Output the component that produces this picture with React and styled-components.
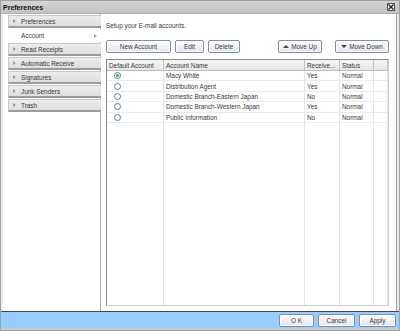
import React from "react";
import styled, { createGlobalStyle } from "styled-components";

const Global = createGlobalStyle`
  html, body { margin: 0; padding: 0; background: #fff; }
  body { font-family: "Liberation Sans", Arial, sans-serif; }
  * { box-sizing: border-box; }
`;

const Window = styled.div`
  width: 400px;
  height: 331px;
  background: #ececec;
  border: 1px solid #a0a0a0;
  display: flex;
  flex-direction: column;
  font-size: 6.4px;
  color: #3a3a3a;
`;

const TitleBar = styled.div`
  height: 13px;
  background: linear-gradient(#d4d4d4, #c2c2c2);
  border-bottom: 1px solid #b0b0b0;
  display: flex;
  align-items: center;
  justify-content: space-between;
  padding: 0 4px 0 2px;
  font-weight: bold;
  font-size: 7px;
  color: #111;
`;

const CloseBox = styled.div`
  width: 8px;
  height: 8px;
  border: 1px solid #555;
  background: #f4f4f4;
  display: flex;
  align-items: center;
  justify-content: center;
`;

const Body = styled.div`
  flex: 1;
  display: flex;
  padding: 0 2px 0 2px;
  min-height: 0;
`;

const Sidebar = styled.div`
  width: 98px;
  background: #fff;
  border-right: 1px solid #b4b4b4;
  padding: 1px 0 0 5px;
  display: flex;
  flex-direction: column;
  gap: 1px;
`;

const NavItem = styled.div`
  height: 13px;
  margin-right: -2px;
  display: flex;
  align-items: center;
  justify-content: space-between;
  padding: 0 4px 0 4px;
  background: ${(p) => (p.$active ? "#fff" : "linear-gradient(#ececec, #dedede)")};
  border: ${(p) => (p.$active ? "1px solid transparent" : "1px solid #cacaca")};
  border-bottom: ${(p) => (p.$active ? "1px solid transparent" : "2px solid #9c9c9c")};
  color: #3a3a3a;
`;

const NavLabel = styled.span`
  display: flex;
  align-items: center;
  gap: 5px;
`;

const Tri = styled.span`
  width: 0;
  height: 0;
  border-top: 2px solid transparent;
  border-bottom: 2px solid transparent;
  border-left: 3px solid #a0a0a0;
  visibility: ${(p) => (p.$hidden ? "hidden" : "visible")};
`;

const Content = styled.div`
  flex: 1;
  background: #fff;
  padding: 6px 7px 5px 5px;
  display: flex;
  flex-direction: column;
  border-right: 1px solid #a89aa8;
`;

const Intro = styled.div`
  height: 10px;
  display: flex;
  align-items: center;
  margin-bottom: 10px;
`;

const ButtonRow = styled.div`
  display: flex;
  align-items: center;
  gap: 4px;
  margin-bottom: 6px;
`;

const Spacer = styled.div`
  flex: 1;
`;

const Btn = styled.button`
  height: 13px;
  width: ${(p) => p.$w}px;
  padding: 0;
  margin-left: ${(p) => p.$ml || 0}px;
  border: 1px solid #7d8fab;
  border-radius: 2px;
  background: linear-gradient(#fdfdfd, #e4e6ee);
  font-family: "Liberation Sans", Arial, sans-serif;
  font-size: 6.4px;
  color: #3a3a3a;
  display: flex;
  align-items: center;
  justify-content: center;
  gap: 2px;
  box-shadow: inset 0 0 0 1px #fff;
`;

const UpTri = styled.span`
  width: 0;
  height: 0;
  border-left: 3px solid transparent;
  border-right: 3px solid transparent;
  ${(p) => (p.$down ? "border-top: 3px solid #444;" : "border-bottom: 3px solid #444;")}
`;

const Table = styled.div`
  flex: 1;
  border: 1px solid #8a8a8a;
  border-right-color: #d0d0d0;
  border-bottom-color: #d0d0d0;
  display: grid;
  grid-template-columns: 57px 141px 35px 34px 1fr;
  grid-template-rows: 11px repeat(5, 10.4px) 1fr;
  background: #fff;
`;

const Head = styled.div`
  background: linear-gradient(#f6f6f6, #e6e6e6);
  border-right: 1px solid #c4c4c4;
  border-bottom: 1px solid #bdbdbd;
  padding-left: 2px;
  display: flex;
  align-items: center;
  white-space: nowrap;
  overflow: hidden;
`;

const Cell = styled.div`
  border-right: 1px solid #e4e4e4;
  border-bottom: 1px solid #ececec;
  padding-left: 2px;
  display: flex;
  align-items: center;
  white-space: nowrap;
  overflow: hidden;
`;

const FillCell = styled.div`
  border-right: 1px solid #e4e4e4;
`;

const Radio = styled.span`
  margin-left: 5px;
  width: 7px;
  height: 7px;
  border-radius: 50%;
  border: 1px solid #5a7ea6;
  background: #fff;
  display: flex;
  align-items: center;
  justify-content: center;
  &::after {
    content: "";
    width: 3px;
    height: 3px;
    border-radius: 50%;
    background: ${(p) => (p.$checked ? "#3aa83a" : "transparent")};
  }
`;

const Footer = styled.div`
  height: 19px;
  background: #99ccff;
  border-top: 1px solid #3a4a5a;
  border-bottom: 2px solid #c8c8c8;
  display: flex;
  align-items: center;
  justify-content: flex-end;
  gap: 4px;
  padding-right: 3px;
`;

const navItems = [
  "Preferences",
  "Account",
  "Read Receipts",
  "Automatic Receive",
  "Signatures",
  "Junk Senders",
  "Trash",
];

const accounts = [
  { name: "Macy White", rec: "Yes", status: "Normal", def: true },
  { name: "Distribution Agent", rec: "Yes", status: "Normal" },
  { name: "Domestic Branch-Eastern Japan", rec: "No", status: "Normal" },
  { name: "Domestic Branch-Western Japan", rec: "Yes", status: "Normal" },
  { name: "Public Information", rec: "No", status: "Normal" },
];

export default function App() {
  return (
    <>
      <Global />
      <Window>
        <TitleBar>
          <span>Preferences</span>
          <CloseBox>
            <svg width="6" height="6" viewBox="0 0 6 6">
              <path d="M0.5 0.5 L5.5 5.5 M5.5 0.5 L0.5 5.5" stroke="#222" strokeWidth="1.3" />
            </svg>
          </CloseBox>
        </TitleBar>
        <Body>
          <Sidebar>
            {navItems.map((n) => (
              <NavItem key={n} $active={n === "Account"}>
                <NavLabel>
                  <Tri $hidden={n === "Account"} />
                  {n}
                </NavLabel>
                {n === "Account" && <Tri />}
              </NavItem>
            ))}
          </Sidebar>
          <Content>
            <Intro>Setup your E-mail accounts.</Intro>
            <ButtonRow>
              <Btn $w={65}>New Account</Btn>
              <Btn $w={29}>Edit</Btn>
              <Btn $w={32}>Delete</Btn>
              <Spacer />
              <Btn $w={44}>
                <UpTri />
                Move Up
              </Btn>
              <Btn $w={54} $ml={9}>
                <UpTri $down />
                Move Down
              </Btn>
            </ButtonRow>
            <Table>
              <Head>Default Account</Head>
              <Head>Account Name</Head>
              <Head>Receive...</Head>
              <Head>Status</Head>
              <Head />
              {accounts.map((a) => (
                <React.Fragment key={a.name}>
                  <Cell>
                    <Radio $checked={a.def} />
                  </Cell>
                  <Cell>{a.name}</Cell>
                  <Cell>{a.rec}</Cell>
                  <Cell>{a.status}</Cell>
                  <Cell />
                </React.Fragment>
              ))}
              <FillCell />
              <FillCell />
              <FillCell />
              <FillCell />
              <FillCell />
            </Table>
          </Content>
        </Body>
        <Footer>
          <Btn $w={35}>O K</Btn>
          <Btn $w={37}>Cancel</Btn>
          <Btn $w={37}>Apply</Btn>
        </Footer>
      </Window>
    </>
  );
}
